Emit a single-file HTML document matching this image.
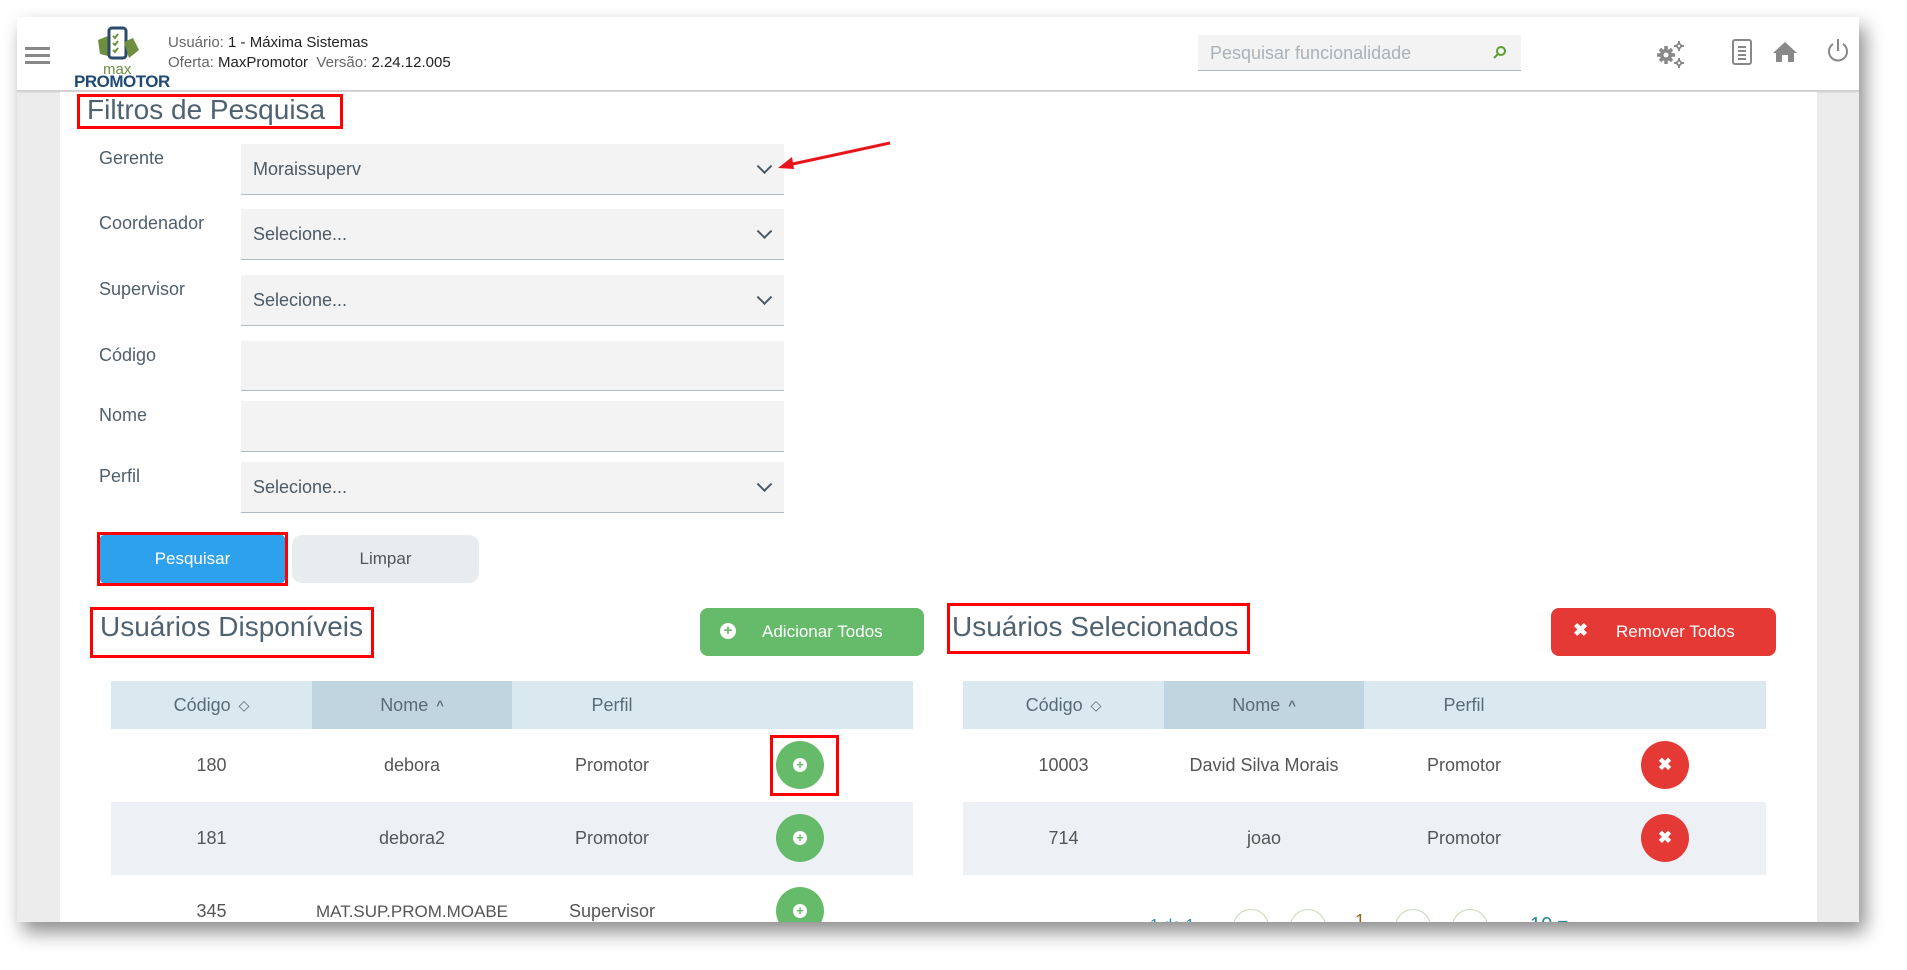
<!DOCTYPE html>
<html><head><meta charset="utf-8"><style>
*{box-sizing:border-box;margin:0;padding:0}
body{width:1907px;height:970px;background:#fff;position:relative;overflow:hidden;font-family:"Liberation Sans",sans-serif;color:#555}
.abs{position:absolute}
#win{left:17px;top:17px;width:1842px;height:905px;background:#ececec;box-shadow:6px 10px 18px rgba(0,0,0,.45);overflow:hidden}
#hdr{left:0;top:0;width:1842px;height:74px;background:#fff;border-bottom:1px solid #cfcfcf;box-shadow:0 1px 2px rgba(0,0,0,.15)}
#panel{left:43px;top:75px;width:1757px;height:830px;background:#fff}
#clip{left:0;top:0;width:1907px;height:922px;overflow:hidden}
.lbl{font-size:18px;color:#4f5f6b}
.inp{background:#f3f3f3;border-bottom:1px solid #b0bcc4;width:543px;font-size:18px;color:#4b5a66;padding-left:12px}
.chev{position:absolute;right:14px;top:50%;width:11px;height:11px;border-right:2px solid #4b5a66;border-bottom:2px solid #4b5a66;transform:translateY(-75%) rotate(45deg)}
.th{background:#dae8f0;height:48px;font-size:18px;color:#5a6b78}
.cell{position:absolute;top:0;height:100%;display:flex;align-items:center;justify-content:center}
.row{height:73px;font-size:18px;color:#555}
.circ{position:absolute;width:48px;height:48px;border-radius:50%;display:flex;align-items:center;justify-content:center}
.red{border:3px solid #f00}
</style></head><body>
<div id="win" class="abs">
 <div id="hdr" class="abs">
  <div class="abs" style="left:8px;top:30px;width:25px;height:3px;background:#888;box-shadow:0 7px 0 #888,0 14px 0 #888"></div>
  <svg class="abs" style="left:78px;top:9px" width="46" height="40" viewBox="0 0 46 40">
   <path d="M3 14 L13 10 L13 30 L5 28 Z" fill="#6d8f3e"/>
   <rect x="14" y="2" width="17" height="30" rx="3" fill="#fff" stroke="#2b4a6b" stroke-width="3"/>
   <path d="M18 10l2 2 3-4M18 17l2 2 3-4M18 24l2 2 3-4" stroke="#6d8f3e" stroke-width="2" fill="none"/>
   <path d="M29 16 L38 12 L44 24 L34 32 Z" fill="#6d8f3e"/>
  </svg>
  <div class="abs" style="left:86px;top:45px;font-size:15px;color:#6d8f3e;line-height:15px">max</div>
  <div class="abs" style="left:57px;top:56px;font-size:17px;font-weight:bold;color:#1f4a75;letter-spacing:-.5px;line-height:17px">PROMOTOR</div>
  <div class="abs" style="left:151px;top:16px;font-size:15px;color:#666;line-height:20px">Usuário: <span style="color:#222">1 - Máxima Sistemas</span><br>Oferta: <span style="color:#222">MaxPromotor</span> &nbsp;Versão: <span style="color:#222">2.24.12.005</span></div>
  <div class="abs" style="left:1181px;top:18px;width:323px;height:36px;background:#f3f3f3;border-bottom:1px solid #aab8c0;font-size:18px;color:#a9b2b8;padding:8px 12px">Pesquisar funcionalidade</div>
  <svg class="abs" style="left:1476px;top:28px" width="14" height="14" viewBox="0 0 14 14"><circle cx="8" cy="6" r="4" fill="none" stroke="#5aa02c" stroke-width="2"/><path d="M5 9 L1 13" stroke="#5aa02c" stroke-width="2"/></svg>
  <svg class="abs" style="left:1638px;top:22px" width="30" height="30" viewBox="0 0 30 30" fill="#888">
   <circle cx="11" cy="16" r="6"/><path d="M11 7v18M2 16h18M5 10l12 12M17 10L5 22" stroke="#888" stroke-width="3.5"/><circle cx="11" cy="16" r="2.5" fill="#fff"/>
   <circle cx="24" cy="7" r="3"/><path d="M24 2v10M19 7h10" stroke="#888" stroke-width="2"/><circle cx="24" cy="7" r="1.2" fill="#fff"/>
   <circle cx="24" cy="24" r="3"/><path d="M24 19v10M19 24h10" stroke="#888" stroke-width="2"/><circle cx="24" cy="24" r="1.2" fill="#fff"/>
  </svg>
  <svg class="abs" style="left:1714px;top:21px" width="22" height="28" viewBox="0 0 22 28"><rect x="2" y="2" width="18" height="24" rx="2" fill="none" stroke="#888" stroke-width="2"/><path d="M7 9h8M7 13h8M7 17h8M7 21h8" stroke="#888" stroke-width="2"/></svg>
  <svg class="abs" style="left:1755px;top:23px" width="26" height="24" viewBox="0 0 26 24" fill="#888"><path d="M13 2 L25 13 L22 13 L22 22 L16 22 L16 15 L10 15 L10 22 L4 22 L4 13 L1 13 Z"/></svg>
  <svg class="abs" style="left:1808px;top:20px" width="26" height="28" viewBox="0 0 26 28"><path d="M8 7 A9 9 0 1 0 18 7" fill="none" stroke="#888" stroke-width="2"/><path d="M13 2 V14" stroke="#888" stroke-width="2"/></svg>
 </div>
 <div id="panel" class="abs"></div>
</div>
<div id="clip" class="abs">
<div class="abs red" style="left:77px;top:94px;width:266px;height:35px"></div>
<div class="abs" style="left:87px;top:94px;font-size:28px;color:#4f6270">Filtros de Pesquisa</div>

<div class="abs lbl" style="left:99px;top:148px">Gerente</div>
<div class="abs inp" style="left:241px;top:144px;height:51px;line-height:50px">Moraissuperv<span class="chev"></span></div>
<div class="abs lbl" style="left:99px;top:213px">Coordenador</div>
<div class="abs inp" style="left:241px;top:209px;height:51px;line-height:50px">Selecione...<span class="chev"></span></div>
<div class="abs lbl" style="left:99px;top:279px">Supervisor</div>
<div class="abs inp" style="left:241px;top:275px;height:51px;line-height:50px">Selecione...<span class="chev"></span></div>
<div class="abs lbl" style="left:99px;top:345px">Código</div>
<div class="abs inp" style="left:241px;top:341px;height:50px"></div>
<div class="abs lbl" style="left:99px;top:405px">Nome</div>
<div class="abs inp" style="left:241px;top:401px;height:51px"></div>
<div class="abs lbl" style="left:99px;top:466px">Perfil</div>
<div class="abs inp" style="left:241px;top:462px;height:51px;line-height:50px">Selecione...<span class="chev"></span></div>

<svg class="abs" style="left:770px;top:138px" width="130" height="40" viewBox="0 0 130 40"><path d="M120 5 L18 27" stroke="#e8141b" stroke-width="3"/><path d="M8 30 L22 19 L24 31 Z" fill="#e8141b"/></svg>

<div class="abs red" style="left:97px;top:532px;width:191px;height:54px"></div>
<div class="abs" style="left:100px;top:535px;width:185px;height:48px;background:#2ea1ec;border-radius:4px;color:#fff;font-size:17px;display:flex;align-items:center;justify-content:center">Pesquisar</div>
<div class="abs" style="left:292px;top:535px;width:187px;height:48px;background:#e9ecef;border-radius:10px;color:#555;font-size:17px;display:flex;align-items:center;justify-content:center">Limpar</div>

<div class="abs red" style="left:90px;top:607px;width:284px;height:51px"></div>
<div class="abs" style="left:100px;top:611px;font-size:28px;color:#4f6270">Usuários Disponíveis</div>
<div class="abs" style="left:700px;top:608px;width:224px;height:48px;background:#66bb6a;border-radius:8px;color:#fff;font-size:17px"><span class="abs" style="left:20px;top:15px;width:16px;height:16px;border-radius:50%;background:#fff;color:#66bb6a;font-size:15px;font-weight:bold;line-height:16px;text-align:center">+</span><span class="abs" style="left:62px;top:14px">Adicionar Todos</span></div>

<div class="abs red" style="left:947px;top:603px;width:303px;height:51px"></div>
<div class="abs" style="left:952px;top:611px;font-size:28px;color:#4f6270">Usuários Selecionados</div>
<div class="abs" style="left:1551px;top:608px;width:225px;height:48px;background:#e53935;border-radius:8px;color:#fff;font-size:17px"><span class="abs" style="left:22px;top:12px;font-weight:bold;font-size:18px">✖</span><span class="abs" style="left:65px;top:14px">Remover Todos</span></div>

<div class="abs th" style="left:111px;top:681px;width:802px">
 <div class="cell" style="left:0;width:201px">Código <span style="margin-left:8px;font-size:14px">◇</span></div>
 <div class="cell" style="left:201px;width:200px;background:#c0d5df">Nome <span style="margin-left:8px;font-size:13px;font-weight:bold">^</span></div>
 <div class="cell" style="left:401px;width:200px">Perfil</div>
</div>
<div class="abs row" style="left:111px;top:729px;width:802px;background:#fff">
 <div class="cell" style="left:0;width:201px">180</div><div class="cell" style="left:201px;width:200px">debora</div><div class="cell" style="left:401px;width:200px">Promotor</div>
</div>
<div class="abs row" style="left:111px;top:802px;width:802px;background:#edf1f6">
 <div class="cell" style="left:0;width:201px">181</div><div class="cell" style="left:201px;width:200px">debora2</div><div class="cell" style="left:401px;width:200px">Promotor</div>
</div>
<div class="abs row" style="left:111px;top:875px;width:802px;background:#fff">
 <div class="cell" style="left:0;width:201px">345</div><div class="cell" style="left:201px;width:200px;font-size:17px">MAT.SUP.PROM.MOABE</div><div class="cell" style="left:401px;width:200px">Supervisor</div>
</div>
<div class="circ" style="left:776px;top:741px;background:#66bb6a"><span style="width:14px;height:14px;border-radius:50%;background:#fff;color:#66bb6a;font-weight:bold;font-size:13px;line-height:14px;text-align:center">+</span></div>
<div class="circ" style="left:776px;top:814px;background:#66bb6a"><span style="width:14px;height:14px;border-radius:50%;background:#fff;color:#66bb6a;font-weight:bold;font-size:13px;line-height:14px;text-align:center">+</span></div>
<div class="circ" style="left:776px;top:887px;background:#66bb6a"><span style="width:14px;height:14px;border-radius:50%;background:#fff;color:#66bb6a;font-weight:bold;font-size:13px;line-height:14px;text-align:center">+</span></div>
<div class="abs red" style="left:770px;top:735px;width:69px;height:61px"></div>

<div class="abs th" style="left:963px;top:681px;width:803px">
 <div class="cell" style="left:0;width:201px">Código <span style="margin-left:8px;font-size:14px">◇</span></div>
 <div class="cell" style="left:201px;width:200px;background:#c0d5df">Nome <span style="margin-left:8px;font-size:13px;font-weight:bold">^</span></div>
 <div class="cell" style="left:401px;width:200px">Perfil</div>
</div>
<div class="abs row" style="left:963px;top:729px;width:803px;background:#fff">
 <div class="cell" style="left:0;width:201px">10003</div><div class="cell" style="left:201px;width:200px">David Silva Morais</div><div class="cell" style="left:401px;width:200px">Promotor</div>
</div>
<div class="abs row" style="left:963px;top:802px;width:803px;background:#edf1f6">
 <div class="cell" style="left:0;width:201px">714</div><div class="cell" style="left:201px;width:200px">joao</div><div class="cell" style="left:401px;width:200px">Promotor</div>
</div>
<div class="circ" style="left:1641px;top:741px;background:#e53935;color:#fff;font-weight:bold;font-size:17px">✖</div>
<div class="circ" style="left:1641px;top:814px;background:#e53935;color:#fff;font-weight:bold;font-size:17px">✖</div>

<div class="abs" style="left:1100px;top:880px;width:600px;height:42px;overflow:hidden">
 <span class="abs" style="left:50px;top:37px;font-size:16px;color:#2a8a9a">1 de 1</span>
 <span class="abs" style="left:133px;top:29px;width:36px;height:36px;border-radius:50%;border:1px solid #c5d8b5"></span>
 <span class="abs" style="left:190px;top:29px;width:36px;height:36px;border-radius:50%;border:1px solid #c5d8b5"></span>
 <span class="abs" style="left:255px;top:31px;font-size:18px;color:#8a6a1a">1</span>
 <span class="abs" style="left:295px;top:29px;width:36px;height:36px;border-radius:50%;border:1px solid #c5d8b5"></span>
 <span class="abs" style="left:352px;top:29px;width:36px;height:36px;border-radius:50%;border:1px solid #c5d8b5"></span>
 <span class="abs" style="left:430px;top:32px;font-size:20px;color:#2a8a9a">10 ▾</span>
</div>
</div>
</body></html>
